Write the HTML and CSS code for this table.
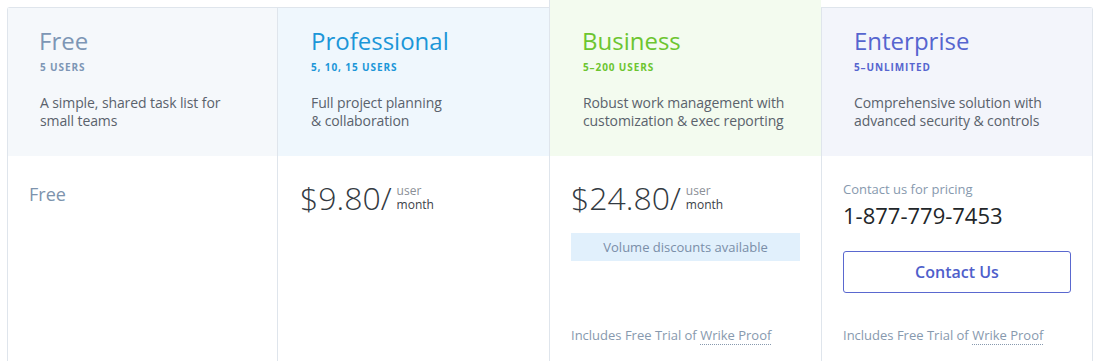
FILE: index.html
```html
<!DOCTYPE html>
<html lang="en">
<head>
<meta charset="utf-8">
<title>Pricing</title>
<link rel="stylesheet" href="styles.css">
</head>
<body>
<div class="plans">
  <section class="plan plan-free">
    <header class="plan-head">
      <h2 class="plan-title">Free</h2>
      <div class="plan-users">5 users</div>
      <p class="plan-desc">A simple, shared task list for<br>small teams</p>
    </header>
    <div class="plan-body">
      <div class="free-price">Free</div>
    </div>
  </section>
  <section class="plan plan-pro">
    <header class="plan-head">
      <h2 class="plan-title">Professional</h2>
      <div class="plan-users">5, 10, 15 users</div>
      <p class="plan-desc">Full project planning<br>&amp; collaboration</p>
    </header>
    <div class="plan-body">
      <div class="price"><span class="amount">$9.80/</span><span class="unit"><span class="unit-top">user</span><span class="unit-bottom">month</span></span></div>
    </div>
  </section>
  <section class="plan plan-business">
    <header class="plan-head">
      <h2 class="plan-title">Business</h2>
      <div class="plan-users">5–200 users</div>
      <p class="plan-desc">Robust work management with<br>customization &amp; exec reporting</p>
    </header>
    <div class="plan-body">
      <div class="price"><span class="amount">$24.80/</span><span class="unit"><span class="unit-top">user</span><span class="unit-bottom">month</span></span></div>
      <div class="volume">Volume discounts available</div>
      <p class="plan-foot">Includes Free Trial of <span class="proof">Wrike Proof</span></p>
    </div>
  </section>
  <section class="plan plan-enterprise">
    <header class="plan-head">
      <h2 class="plan-title">Enterprise</h2>
      <div class="plan-users">5–Unlimited</div>
      <p class="plan-desc">Comprehensive solution with<br>advanced security &amp; controls</p>
    </header>
    <div class="plan-body">
      <div class="contact-note">Contact us for pricing</div>
      <div class="phone">1-877-779-7453</div>
      <button class="contact-btn" type="button">Contact Us</button>
      <p class="plan-foot">Includes Free Trial of <span class="proof">Wrike Proof</span></p>
    </div>
  </section>
</div>
</body>
</html>
```

FILE: styles.css
```css
* { box-sizing: border-box; }

html, body {
  margin: 0;
  padding: 0;
  background: #ffffff;
  overflow: hidden;
}

body {
  font-family: "Open Sans", "Noto Sans", sans-serif;
  color: #555f6b;
}

.plans {
  display: grid;
  grid-template-columns: 270px 272px 272px 272px;
  align-items: start;
  padding: 0 7px;
  height: 361px;
}

.plan {
  display: flex;
  flex-direction: column;
  border-left: 1px solid #dfe5ec;
  margin-top: 7px;
  border-top: 1px solid #dfe5ec;
}

.plan-free { border-top-left-radius: 3px; }

.plan-enterprise {
  border-right: 1px solid #dfe5ec;
  border-top-right-radius: 3px;
}

.plan-business {
  margin-top: 0;
  border-top: 0;
}

.plan-head {
  height: 148px;
  padding: 18px 32px 0 33px;
}

.plan-business .plan-head {
  height: 156px;
  padding-top: 26px;
}

.plan-free .plan-head { background: #f5f8fb; padding-left: 32px; }
.plan-pro .plan-head { background: #eff7fd; }
.plan-business .plan-head { background: #f3fbef; }
.plan-enterprise .plan-head { background: #f3f5fb; padding-left: 32px; }

.plan-title {
  margin: 0;
  font-size: 24px;
  line-height: 30px;
  font-weight: 400;
}

.plan-users {
  margin-top: 4px;
  font-size: 10px;
  line-height: 14px;
  font-weight: 700;
  letter-spacing: 0.9px;
  text-transform: uppercase;
}

.plan-desc {
  margin: 20px 0 0;
  font-size: 14px;
  line-height: 18px;
  color: #5a626c;
  letter-spacing: -0.1px;
}

.plan-free .plan-title, .plan-free .plan-users { color: #7d96b5; }
.plan-pro .plan-title, .plan-pro .plan-users { color: #1b96d8; }
.plan-business .plan-title, .plan-business .plan-users { color: #6cc52f; }
.plan-enterprise .plan-title, .plan-enterprise .plan-users { color: #5665cf; }

.plan-free .plan-title { margin-left: -1px; }
.plan-business .plan-title { margin-left: -1px; }

.plan-body {
  display: flex;
  flex-direction: column;
  height: 210px;
  padding: 22px 21px 22px 21px;
}

.plan-pro .plan-body { padding-left: 22px; }

.free-price {
  margin-top: 4px;
  font-size: 18px;
  line-height: 24px;
  color: #7d93ad;
}

.price {
  display: flex;
  align-items: flex-start;
  color: #333a42;
}

.amount {
  font-size: 32px;
  line-height: 40px;
  font-weight: 300;
}

.unit {
  display: flex;
  flex-direction: column;
  margin-top: 6px;
  margin-left: 5px;
  font-size: 12px;
  line-height: 14px;
}

.unit-top { color: #8a8f96; }
.unit-bottom { color: #3b4148; }

.volume {
  margin-top: 15px;
  height: 28px;
  line-height: 28px;
  text-align: center;
  font-size: 13px;
  background: #e1f0fc;
  color: #7a8ea8;
}

.plan-foot {
  margin: auto 0 0;
  font-size: 13px;
  line-height: 18px;
  color: #8799ae;
}

.proof {
  border-bottom: 1px dotted #8799ae;
}

.contact-note {
  margin-top: 2px;
  font-size: 13px;
  line-height: 18px;
  color: #8799ae;
}

.phone {
  margin-top: 3px;
  font-size: 22px;
  line-height: 28px;
  color: #222629;
}

.contact-btn {
  margin-top: 22px;
  width: 100%;
  height: 42px;
  border: 1px solid #5a68cf;
  border-radius: 3px;
  background: #ffffff;
  color: #4f5fcb;
  font-family: "Open Sans", "Noto Sans", sans-serif;
  font-size: 16px;
  font-weight: 600;
  cursor: pointer;
}
```
